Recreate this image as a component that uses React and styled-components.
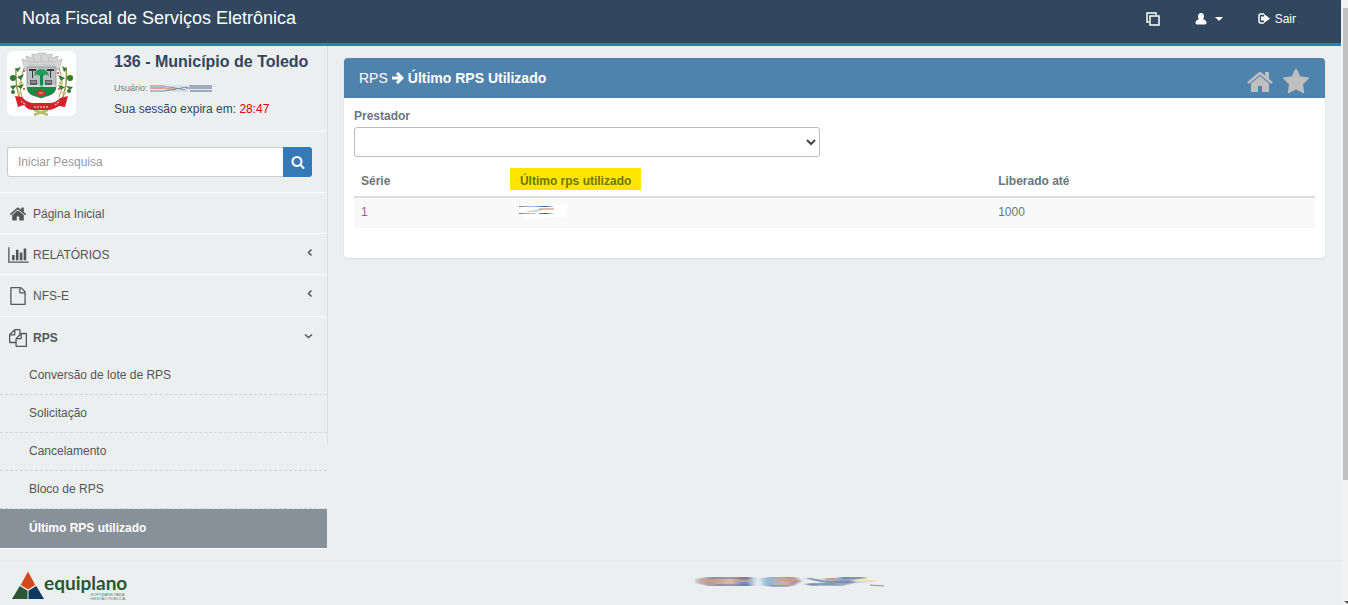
import React, { useState } from "react";
import styled, { createGlobalStyle, css } from "styled-components";

const HomePath =
  "M1472 992v480q0 26-19 45t-45 19h-384v-384h-256v384h-384q-26 0-45-19t-19-45v-480q0-1 .5-3t.5-3l575-474 575 474q1 2 1 6zm223-69l-62 74q-8 9-21 11h-3q-13 0-21-7l-692-577-692 577q-12 8-24 7-13-2-21-11l-62-74q-8-10-7-23.5t11-21.5l719-599q32-26 76-26t76 26l244 204v-195q0-14 9-23t23-9h192q14 0 23 9t9 23v408l219 182q10 8 11 21.5t-7 23.5z";
const StarPath =
  "M1728 647q0 22-26 48l-363 354 86 500q1 7 1 20 0 21-10.5 35.5t-30.5 14.5q-19 0-40-12l-449-236-449 236q-22 12-40 12-21 0-31.5-14.5t-10.5-35.5q0-6 2-20l86-500-364-354q-25-27-25-48 0-37 56-46l502-73 225-455q19-41 49-41t49 41l225 455 502 73q56 9 56 46z";
const SearchPath =
  "M1216 832q0-185-131.5-316.5t-316.5-131.5-316.5 131.5-131.5 316.5 131.5 316.5 316.5 131.5 316.5-131.5 131.5-316.5zm512 832q0 52-38 90t-90 38q-54 0-90-38l-343-342q-179 124-399 124-143 0-273.5-55.5t-225-150-150-225-55.5-273.5 55.5-273.5 150-225 225-150 273.5-55.5 273.5 55.5 225 150 150 225 55.5 273.5q0 220-124 399l343 343q37 37 37 90z";
const ChartPath =
  "M640 896v512h-256v-512h256zm384-512v1024h-256v-1024h256zm1024 1152v128h-2048v-1536h128v1408h1920zm-640-896v768h-256v-768h256zm384-384v1152h-256v-1152h256z";
const FilePath =
  "M1596 380q28 28 48 76t20 88v1152q0 40-28 68t-68 28h-1344q-40 0-68-28t-28-68v-1600q0-40 28-68t68-28h896q40 0 88 20t76 48zm-444-244v376h376q-10-29-22-41l-313-313q-12-12-41-22zm384 1528v-1024h-416q-40 0-68-28t-28-68v-416h-768v1536h1280z";
const FilesPath =
  "M1696 384q40 0 68 28t28 68v1216q0 40-28 68t-68 28h-960q-40 0-68-28t-28-68v-288h-544q-40 0-68-28t-28-68v-672q0-40 20-88t48-76l408-408q28-28 76-48t88-20h416q40 0 68 28t28 68v328q68-40 128-40h416zm-544 213l-299 299h299v-299zm-640-384l-299 299h299v-299zm196 647l316-316v-416h-384v416q0 40-28 68t-68 28h-416v640h512v-256q0-40 20-88t48-76zm956 804v-1152h-384v416q0 40-28 68t-68 28h-416v640h896z";

const Icon = ({ path, size, box = "0 0 1792 1792", width }) => (
  <svg width={width || size} height={size} viewBox={box} fill="currentColor" aria-hidden="true">
    <path d={path} />
  </svg>
);

const Chevron = ({ down }) => (
  <svg width="10" height="14" viewBox="0 0 10 14" fill="none" stroke="#555" strokeWidth="1.5" aria-hidden="true">
    <path d={down ? "M1 3.5L4.5 6.500L8 3.5" : "M7.5 1.5L4.5 4.5L7.5 7.5"} />
  </svg>
);

const Crest = () => (
  <svg width="69" height="65" viewBox="0 0 69 65" role="img" aria-label="Brasão de Toledo">
    <rect width="69" height="65" rx="6" fill="#fff" />
    <g fill="#d6d6d6" stroke="#b5b5b5" strokeWidth=".7">
      <path d="M15 8l5 2-1-5 6 2v-4l6 1V2h8v2l6-1v4l6-2-1 5 5-2-3 11H18z" />
      <path d="M21 11l27 0M22 14h26M27 6v5M34 4v7M42 6v5" fill="none" />
    </g>
    <path d="M20 16h29v19q0 7-6 9l-9 3-9-3q-5-2-5-9z" fill="#bcbfc4" stroke="#999" />
    <path d="M20 36h29v1q-1 5-6 7l-9 3-9-3q-4-2-5-7z" fill="#148a43" />
    <path d="M33 21h3v15h-3z" fill="#17884b" />
    <path d="M27 25q1-7 7-7 7 0 8 7-4-3-5 0-3-3-5 0-2-3-5 0z" fill="#249d5b" />
    <path d="M22 18h7v2h-3v7h-1v-7h-3zM40 18h7v2h-3v7h-1v-7h-3z" fill="#383838" />
    <path d="M23 29h7v5h-7zM38 29h7v5h-7z" fill="#5d5d61" />
    <path d="M24 31h5M39 31h5" stroke="#bbb" />
    <path d="M20 35h29" stroke="#f4f4f4" />
    <ellipse cx="34" cy="42" rx="5" ry="3" fill="#c93636" />
    <path d="M32 42h4" stroke="#ddd06d" />
    <g fill="none" strokeWidth="1.5">
      <path d="M9 17q-1 17 4 32M59 16q2 17-4 33" stroke="#9a9b49" />
      <path d="M17 17q-6 16-2 30M52 17q6 16 0 29" stroke="#b69a59" strokeWidth="1" />
    </g>
    <g fill="#327b36">
      <path d="M3 25l7 1-4 4zM8 18l6-2-3 5zM10 26l7-3-3 6zM3 35l7-1-4 5zM10 35l7-2-3 5zM66 25l-7 1 4 4zM60 18l-5-3 2 6zM58 27l-7-3 3 6zM66 36l-7-1 4 4zM58 36l-7-2 3 5z" />
      <circle cx="6" cy="27" r="3" />
      <circle cx="63" cy="27" r="3" />
      <circle cx="6" cy="41" r="2" />
      <circle cx="62" cy="40" r="2" />
    </g>
    <g fill="#c8c778">
      <circle cx="14" cy="32" r="2" />
      <circle cx="54" cy="32" r="2" />
      <circle cx="12" cy="42" r="2" />
      <circle cx="57" cy="42" r="2" />
    </g>
    <g fill="#c63c35">
      <circle cx="17" cy="20" r="1" />
      <circle cx="51" cy="22" r="1" />
      <circle cx="17" cy="38" r="1" />
      <circle cx="52" cy="38" r="1" />
    </g>
    <path d="M27 59l14 5M41 59l-14 5M29 57l11 2" stroke="#b6bd67" strokeWidth="2.5" />
    <path d="M8 45l7 1q5 6 12 6h15q7 0 11-5l8-2-3 11-6-1q-6 4-11 4H27q-7 0-10-5l-6 2z" fill="#d2232d" />
    <path d="M14 50l5 4M27 56h15M48 54l5-4" stroke="#eda9a6" strokeWidth="1.5" strokeDasharray="2 1" />
  </svg>
);

const UserSmudge = () => (
  <svg width="62" height="7" viewBox="0 0 62 7" aria-hidden="true">
    <path d="M0 0h62v7H0z" fill="#dfe9f1" />
    <path d="M0 3h14l12 2" stroke="#dda68a" fill="none" strokeWidth="2" />
    <path d="M0 1l14 0 22 4M0 6h14l23-4" fill="none" stroke="#8a8798" />
    <path d="M14 1h24M22 6h16" stroke="#c2e0ee" />
    <path d="M40 0v1h22M36 3h26M40 6h22" fill="none" stroke="#626b8b" />
  </svg>
);

const ValueSmudge = () => (
  <svg width="48" height="14" viewBox="0 0 48 14" aria-hidden="true">
    <path d="M0 0h48v12H27v2H5v-3H0z" fill="#fff" />
    <defs>
      <linearGradient id="value">
        <stop stopColor="#9b6d78" />
        <stop offset=".35" stopColor="#9fd1ed" />
        <stop offset=".75" stopColor="#315b85" />
        <stop offset="1" stopColor="#fff" />
      </linearGradient>
    </defs>
    <path d="M0 1h36v1H0zM0 8h16v1H0zM20 8h15v1H20z" fill="url(#value)" />
    <path d="M5 7l15-3h6l-8 3z" fill="#b5dff5" />
    <path d="M20 4h15" stroke="#d5a77d" strokeWidth="2" opacity=".7" />
  </svg>
);

const FooterSmudge = () => (
  <svg width="190" height="10" viewBox="0 0 190 10" aria-hidden="true">
    <defs>
      <linearGradient id="smudge">
        <stop stopColor="#c8c9d1" />
        <stop offset=".08" stopColor="#b09798" />
        <stop offset=".2" stopColor="#dfbda6" />
        <stop offset=".28" stopColor="#667faf" />
        <stop offset=".34" stopColor="#e5edf0" />
        <stop offset=".4" stopColor="#8eb8da" />
        <stop offset=".5" stopColor="#d7af9b" />
        <stop offset=".6" stopColor="#75779a" />
        <stop offset=".7" stopColor="#adc8da" />
        <stop offset=".84" stopColor="#899fb8" />
        <stop offset="1" stopColor="#ebefef" />
      </linearGradient>
      <filter id="soft">
        <feGaussianBlur stdDeviation="2 0" />
      </filter>
    </defs>
    <g filter="url(#soft)">
      <path d="M0 2l12-2h50v9H14L0 6zM65 1l35-1 6 4-8 5H67zM110 1l20 2 16-3h27l-17 4 25 1-22 1-13 3h-29l-7-2 18-1z" fill="url(#smudge)" />
      <path d="M15 1h40M20 8h36M72 0h24M74 9h20M113 1l18 4h28M112 7h28M147 1h23" fill="none" stroke="#64789e" />
      <path d="M4 4h18M40 4h16M82 3h20M130 2h12" stroke="#cf9f85" strokeWidth="2" />
      <path d="M160 4h20" stroke="#eee1a6" strokeWidth="2" />
    </g>
    <path d="M175 8l14 1" stroke="#9b8884" />
  </svg>
);

const menu = [
  { label: "Página Inicial", icon: <Icon path={HomePath} size={18} /> },
  {
    label: "RELATÓRIOS",
    icon: <Icon path={ChartPath} size={18} width={21} box="0 0 2048 1792" />,
    arrow: true,
  },
  { label: "NFS-E", icon: <Icon path={FilePath} size={18} />, arrow: true },
  { label: "RPS", icon: <Icon path={FilesPath} size={18} />, arrow: true, open: true },
];

const subMenu = [
  "Conversão de lote de RPS",
  "Solicitação",
  "Cancelamento",
  "Bloco de RPS",
  "Último RPS utilizado",
];

const Header = () => (
  <HeaderStyle>
    <Brand href="#">Nota Fiscal de Serviços Eletrônica</Brand>
    <HeaderNav>
      <HeaderButton type="button" aria-label="Janelas">
        <svg width="14" height="14" viewBox="0 0 14 14" fill="none" stroke="#fff" strokeWidth="1.5">
          <path d="M3 10H1V1h9v2M4 4h9v9H4z" />
        </svg>
      </HeaderButton>
      <HeaderButton type="button" aria-label="Usuário">
        <svg width="12" height="12" viewBox="0 0 12 12" fill="#fff">
          <path d="M6 0c2 0 3 1.500 3 3.500 0 1.200-.4 2-1 2.700 2 .6 3.500 1.700 3.500 3.600 0 1-.7 1.700-1.500 1.700H2C1.200 11.500.5 10.800.5 9.800.5 7.900 2 6.800 4 6.200 3.400 5.500 3 4.700 3 3.500 3 1.500 4 0 6 0z" />
        </svg>
        <svg width="8" height="4" viewBox="0 0 8 4" fill="#fff">
          <path d="M0 0h8L4 4z" />
        </svg>
      </HeaderButton>
      <ExitLink href="#">
        <svg width="12" height="11" viewBox="0 0 12 11">
          <path d="M6 1H2.500Q1 1 1 2.500v6Q1 10 2.500 10H6" fill="none" stroke="#fff" strokeWidth="1.500" />
          <path d="M6 1l6 4.500L6 10V7.500H3v-4h3z" fill="#fff" />
        </svg>
        Sair
      </ExitLink>
    </HeaderNav>
  </HeaderStyle>
);

const Sidebar = () => (
  <SidebarStyle>
    <Profile>
      <Crest />
      <ProfileText>
        <City>136 - Município de Toledo</City>
        <UserLine>
          Usuário: <UserSmudge />
        </UserLine>
        <Session>
          Sua sessão expira em: <Timer>28:47</Timer>
        </Session>
      </ProfileText>
    </Profile>
    <SearchForm onSubmit={(e) => e.preventDefault()}>
      <SearchInput type="text" placeholder="Iniciar Pesquisa" aria-label="Iniciar Pesquisa" />
      <SearchButton type="submit" aria-label="Pesquisar">
        <Icon path={SearchPath} size={14} />
      </SearchButton>
    </SearchForm>
    <nav>
      {menu.map((item) => (
        <MenuLink href="#" key={item.label} $open={item.open}>
          <MenuIcon>{item.icon}</MenuIcon>
          <MenuLabel>{item.label}</MenuLabel>
          {item.arrow ? <Chevron down={item.open} /> : null}
        </MenuLink>
      ))}
      <SubMenu>
        {subMenu.map((label, i) => (
          <li key={label}>
            <SubLink href="#" $active={i === subMenu.length - 1}>
              {label}
            </SubLink>
          </li>
        ))}
      </SubMenu>
    </nav>
  </SidebarStyle>
);

const RpsPanel = () => {
  const [prestador, setPrestador] = useState("");

  return (
    <Panel>
      <PanelHeader>
        <PanelTitle>
          RPS
          <svg width="12" height="12" viewBox="0 0 12 12" fill="none" stroke="#fff" strokeWidth="3" aria-hidden="true">
            <path d="M0 6h10M5 1l5 5-5 5" />
          </svg>
          <b>Último RPS Utilizado</b>
        </PanelTitle>
        <PanelTools>
          <ToolButton type="button" aria-label="Página inicial">
            <Icon path={HomePath} size={28} />
          </ToolButton>
          <ToolButton type="button" aria-label="Favorito">
            <Icon path={StarPath} size={28} />
          </ToolButton>
        </PanelTools>
      </PanelHeader>
      <PanelBody>
        <Label htmlFor="prestador">Prestador</Label>
        <Select id="prestador" value={prestador} onChange={(e) => setPrestador(e.target.value)}>
          <option value=""></option>
        </Select>
        <Table>
          <colgroup>
            <Col $width="15.5%" />
            <Col $width="50.8%" />
            <Col $width="33.7%" />
          </colgroup>
          <thead>
            <tr>
              <th>Série</th>
              <th>
                <Mark>Último rps utilizado</Mark>
              </th>
              <th>Liberado até</th>
            </tr>
          </thead>
          <tbody>
            <tr>
              <td>1</td>
              <ValueCell>
                <ValueSmudge />
              </ValueCell>
              <td>1000</td>
            </tr>
          </tbody>
        </Table>
      </PanelBody>
    </Panel>
  );
};

const Footer = () => (
  <FooterStyle>
    <Logo>
      <svg width="32" height="29" viewBox="0 0 33 29" aria-hidden="true">
        <path d="M16.500 0L24 14l-7.500 4.500L9 14z" fill="#d3481f" />
        <path d="M8 15l8 5v8.500H0z" fill="#2b5636" />
        <path d="M25 15l-8 5v8.500h16z" fill="#063a60" />
      </svg>
      <LogoText>
        <LogoName>equiplano</LogoName>
        <LogoTag>
          SOFTWARE PARA
          <br />
          GESTÃO PÚBLICA
        </LogoTag>
      </LogoText>
    </Logo>
    <FooterInfo>
      <FooterSmudge />
    </FooterInfo>
  </FooterStyle>
);

const App = () => (
  <Shell>
    <GlobalStyle />
    <Page>
      <Header />
      <Content>
        <Sidebar />
        <Main>
          <RpsPanel />
        </Main>
      </Content>
      <Footer />
    </Page>
    <ScrollTrack>
      <ScrollThumb />
      <ScrollArrow width="6" height="4" viewBox="0 0 6 4">
        <path d="M2 0h4v3z" fill="#505050" />
      </ScrollArrow>
    </ScrollTrack>
  </Shell>
);

const GlobalStyle = createGlobalStyle`
  * {
    box-sizing: border-box;
  }

  body {
    margin: 0;
    background-color: #ebefef;
    color: #6a7680;
    font-family: "Liberation Sans", Arial, sans-serif;
    font-size: 12px;
    line-height: 18px;
  }

  a {
    color: inherit;
    text-decoration: none;
  }

  svg {
    display: block;
    flex: none;
  }
`;

const Shell = styled.div`
  display: flex;
  min-height: 100vh;
`;

const Page = styled.div`
  flex: 1;
  min-width: 0;
  display: flex;
  flex-direction: column;
`;

const HeaderStyle = styled.header`
  display: flex;
  justify-content: space-between;
  padding: 0 45px 7px 22px;
  background-color: #30475e;
  border-bottom: 3px solid #337ab7;
  color: #fff;
`;

const Brand = styled.a`
  font-size: 18px;
  line-height: 36px;
`;

const HeaderNav = styled.nav`
  display: flex;
  align-items: center;
  gap: 35px;
  padding-top: 1px;
`;

const HeaderButton = styled.button`
  display: flex;
  align-items: center;
  gap: 8px;
  padding: 0;
  background: none;
  border: none;
`;

const ExitLink = styled.a`
  display: flex;
  align-items: center;
  gap: 5px;
`;

const Content = styled.div`
  flex: 1;
  display: flex;
`;

const SidebarStyle = styled.aside`
  width: 328px;
  flex: none;
  padding-right: 1px;
  background: linear-gradient(#dcdfe1, #dcdfe1) right top / 1px 398px no-repeat;
`;

const Profile = styled.div`
  display: flex;
  gap: 38px;
  height: 85px;
  padding: 5px 7px;
`;

const ProfileText = styled.div`
  display: flex;
  flex-direction: column;
  white-space: nowrap;
`;

const City = styled.strong`
  color: #30475e;
  font-size: 16px;
  line-height: 22px;
`;

const UserLine = styled.div`
  display: flex;
  align-items: center;
  gap: 2px;
  padding-top: 7px;
  color: #7a7a7a;
  font-size: 9px;
  line-height: 16px;
`;

const Session = styled.div`
  padding-top: 4px;
  color: #30475e;
`;

const Timer = styled.span`
  color: #e60000;
`;

const SearchForm = styled.form`
  display: flex;
  padding: 15px 15px 15px 7px;
  border-top: 1px solid #f8fafa;
`;

const SearchInput = styled.input`
  flex: 1;
  min-width: 0;
  height: 30px;
  padding: 5px 10px;
  background-color: #fff;
  border: 1px solid #ccc;
  border-right: none;
  border-radius: 3px 0 0 3px;
  font-family: inherit;
  font-size: 12px;

  &::placeholder {
    color: #999;
  }
`;

const SearchButton = styled.button`
  display: flex;
  align-items: center;
  justify-content: center;
  width: 29px;
  height: 30px;
  padding: 0;
  background-color: #337ab7;
  border: none;
  border-radius: 0 3px 3px 0;
  color: #fff;
`;

const MenuLink = styled.a`
  display: flex;
  align-items: center;
  gap: 5px;
  height: 41px;
  padding: 2px 13px 0 8px;
  border-top: 1px solid #f8fafa;
  color: #555;

  ${({ $open }) =>
    $open &&
    css`
      margin-top: 1px;
      font-weight: 700;
    `}
`;

const MenuIcon = styled.span`
  display: flex;
  justify-content: center;
  width: 20px;
`;

const MenuLabel = styled.span`
  flex: 1;
`;

const SubMenu = styled.ul`
  margin: 0;
  padding: 0;
  list-style: none;
`;

const SubLink = styled.a`
  display: block;
  padding: 9px 29px 10px;
  border-bottom: 1px dashed #d3d8d9;
  color: #555;

  ${({ $active }) =>
    $active &&
    css`
      padding: 10px 29px 11px;
      background-color: #879199;
      border-bottom: 1px solid #fff;
      color: #fff;
      font-weight: 700;
    `}
`;

const Main = styled.main`
  flex: 1;
  min-width: 0;
  padding: 12px 16px;
`;

const Panel = styled.section`
  background-color: #fff;
  border-radius: 4px;
  box-shadow: 0 1px 2px rgba(0, 0, 0, 0.1);
`;

const PanelHeader = styled.div`
  display: flex;
  align-items: center;
  justify-content: space-between;
  height: 40px;
  padding: 0 15px;
  background-color: #5082ae;
  border-radius: 4px 4px 0 0;
  color: #fff;
`;

const PanelTitle = styled.h1`
  display: flex;
  align-items: center;
  gap: 4px;
  margin: 0;
  font-size: 14px;
  font-weight: 400;
`;

const PanelTools = styled.div`
  display: flex;
  gap: 8px;
  padding-top: 8px;
`;

const ToolButton = styled.button`
  padding: 0;
  background: none;
  border: none;
  color: #bfbfbf;
`;

const PanelBody = styled.div`
  display: flex;
  flex-direction: column;
  padding: 9px 10px 30px;
`;

const Label = styled.label`
  padding-bottom: 2px;
  font-weight: 700;
`;

const Select = styled.select`
  width: 466px;
  max-width: 100%;
  height: 30px;
  padding-right: 1px;
  background-color: #fff;
  border: 1px solid #bbb;
  border-radius: 3px;
  color: #444;
`;

const Table = styled.table`
  width: 100%;
  margin-top: 9px;
  border-collapse: collapse;
  table-layout: fixed;

  th,
  td {
    padding: 6px 7px;
    text-align: left;
  }

  th {
    border-bottom: 2px solid #ddd;
  }

  td {
    padding: 5px 7px 7px;
    background-color: #f9f9f9;
  }
`;

const Col = styled.col`
  width: ${({ $width }) => $width};
`;

const Mark = styled.mark`
  padding: 6px 10px 2px;
  background-color: #ffe600;
  color: #6c7700;
`;

const ValueCell = styled.td`
  && {
    padding-left: 16px;
  }
`;

const FooterStyle = styled.footer`
  display: flex;
  align-items: flex-start;
  height: 45px;
  padding: 10px 12px 0;
  border-top: 1px solid #e3e6e7;
`;

const Logo = styled.div`
  display: flex;
  flex: 1;
`;

const LogoText = styled.div`
  display: flex;
  flex-direction: column;
  align-items: flex-end;
  padding-top: 2px;
`;

const LogoName = styled.span`
  color: #2b5636;
  font-family: Lato, "Liberation Sans", sans-serif;
  font-size: 19px;
  font-weight: 700;
  line-height: 20px;
`;

const LogoTag = styled.small`
  padding-right: 2px;
  color: #5f8068;
  font-size: 4px;
  line-height: 4px;
`;

const FooterInfo = styled.div`
  flex: 1;
  padding: 6px 0 0 48px;
`;

const ScrollTrack = styled.div`
  display: flex;
  flex-direction: column;
  align-items: flex-end;
  width: 7px;
  padding-top: 8px;
  background-color: #f1f1f1;
`;

const ScrollThumb = styled.div`
  width: 5px;
  height: 79%;
  background-color: #c1c1c1;
`;

const ScrollArrow = styled.svg`
  margin-top: auto;
`;

export default App;
